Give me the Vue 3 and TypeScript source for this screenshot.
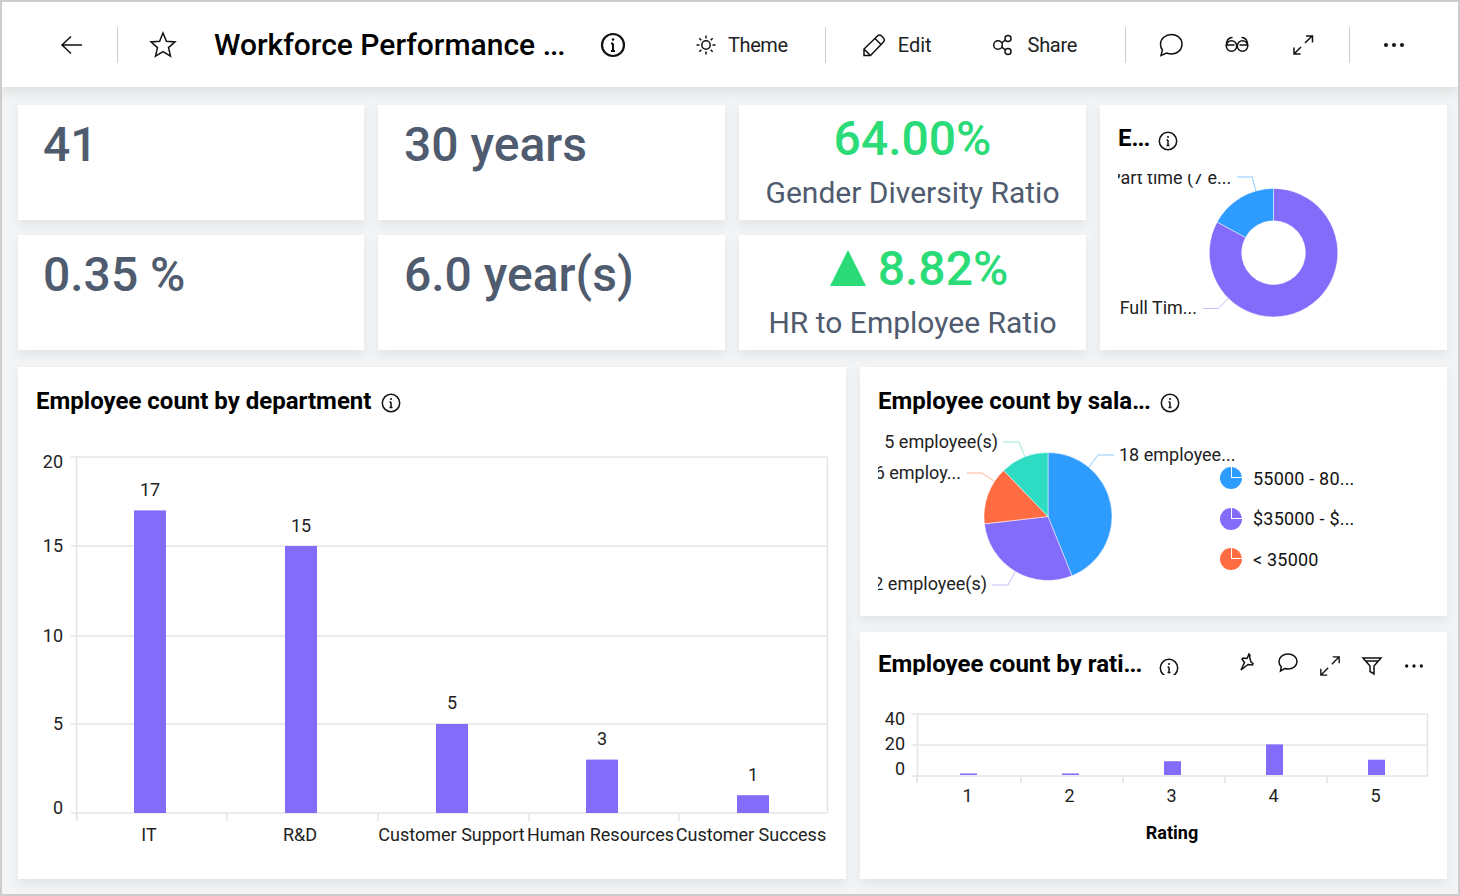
<template>
  <div class="frame">
    <header class="topbar">
      <button class="icon-btn back">
        <svg class="ico" width="24" height="24" viewBox="0 0 24 24"><path d="M22 12H2M11 3.500L2 12l9 8.500" /></svg>
      </button>
      <span class="divider first-div"></span>
      <button class="icon-btn star">
        <svg class="ico" width="28" height="28" viewBox="0 0 28 28"><path d="M14 2l3.400 8.200 8.600.7-6.500 5.700 2 8.600-7.500-4.600-7.500 4.600 2-8.600L2 10.900l8.600-.7z" /></svg>
      </button>
      <h1 class="title">Workforce Performance <span class="dots">...</span></h1>
      <svg class="ico info-big" width="26" height="26" viewBox="0 0 26 26"><circle cx="13" cy="13" r="11" /><path d="M13 11.500V19M11 11.500h2M11 19h4" /><circle class="dot" cx="13" cy="7.500" r="1.300" /></svg>

      <div class="action theme">
        <svg class="ico" width="22" height="22" viewBox="0 0 22 22"><circle cx="11" cy="11" r="4.200" /><path d="M11 1.500v3M11 17.500v3M1.500 11h3M17.500 11h3M4.300 4.300l2 2M15.700 15.700l2 2M4.300 17.700l2-2M15.700 6.300l2-2" /></svg>
        <span class="theme-text">Theme</span>
      </div>
      <span class="divider theme-div"></span>
      <div class="action edit">
        <svg class="ico" width="24" height="24" viewBox="0 0 24 24"><path d="M2 22.500v-6.500L15.500 3c1.200-1.200 2.800-1.200 4 0l2 2c1.200 1.200 1.200 2.800 0 4L8.500 22.500zM2 16l6.500 6.500M13 5.500l6 6" /></svg>
        <span>Edit</span>
      </div>
      <div class="action share">
        <svg class="ico" width="22" height="22" viewBox="0 0 22 22"><circle cx="6" cy="11" r="4.300" /><circle cx="16" cy="4.500" r="3" /><circle cx="16" cy="17.500" r="3" /><path d="M9.700 8.800l3.800-2.800M9.700 13.200l3.800 2.800" /></svg>
        <span class="share-text">Share</span>
      </div>
      <span class="divider share-div"></span>
      <button class="icon-btn comment">
        <svg class="ico" width="26" height="26" viewBox="0 0 26 26"><path d="M13.500 2.500c6 0 10.500 4.200 10.500 9.700s-4.500 9.800-10.500 9.800c-1.700 0-3.300-.3-4.800-1L3 23.500l1.400-5.500C3 16.400 2.500 14.400 2.500 12.200c0-5.500 5-9.700 11-9.700z" /></svg>
      </button>
      <button class="icon-btn glasses">
        <svg class="ico glass" width="26" height="26" viewBox="0 0 26 26"><circle cx="7.500" cy="15" r="5.200" /><circle cx="18.500" cy="15" r="5.200" /><path d="M2.300 15C2.300 10 4.500 6.500 8.500 6.500M23.700 15C23.700 10 21.500 6.500 17.500 6.500M2.500 14h8M15.500 14h8" /></svg>
      </button>
      <button class="icon-btn expand">
        <svg class="ico" width="24" height="24" viewBox="0 0 24 24"><path d="M14 10l7-7M15 3h6.500v6.500M10 14l-7 7M3 14.500V21h6.500" /></svg>
      </button>
      <span class="divider expand-div"></span>
      <button class="icon-btn more">
        <svg class="ico" width="24" height="24" viewBox="0 0 24 24"><circle class="dot" cx="4" cy="12" r="2" /><circle class="dot" cx="12" cy="12" r="2" /><circle class="dot" cx="20" cy="12" r="2" /></svg>
      </button>
    </header>

    <main class="dashboard">
      <div class="top-grid">
        <section class="card kpi first-col">41</section>
        <section class="card kpi">30 years</section>
        <section class="card ratio">
          <div class="ratio-value">64.00%</div>
          <div class="ratio-label">Gender Diversity Ratio</div>
        </section>
        <section class="card donut-card">
          <div class="card-title small">
            <span>E<span class="dots">...</span></span>
            <svg class="ico info" width="20" height="20" viewBox="0 0 20 20"><circle cx="10" cy="10" r="8.700" /><path d="M10 9v5.500M8.500 9H10M8.500 14.500h3" /><circle class="dot" cx="10" cy="6" r="1" /></svg>
          </div>
          <svg class="donut-svg" viewBox="1118 174 329 177">
            <path v-for="s in donutSlices" :key="s.color" :d="s.d" :fill="s.color" stroke="#fff" stroke-width="0.5" />
            <polyline points="1237,177 1252,177 1256,192" class="lead" stroke="#8ccbff" />
            <polyline points="1203,309 1218,309 1229,298" class="lead" stroke="#c6b9fc" />
            <text x="1231" y="184" text-anchor="end" class="chart-text">Part time (7 e...</text>
            <text x="1119" y="315" class="chart-text">Full Tim...</text>
          </svg>
        </section>
        <section class="card kpi first-col">0.35 %</section>
        <section class="card kpi">6.0 year(s)</section>
        <section class="card ratio">
          <div class="ratio-value offset">
            <svg class="up" width="36" height="36" viewBox="0 0 36 36"><path d="M18 0l18 36H0z" /></svg>
            8.82%
          </div>
          <div class="ratio-label">HR to Employee Ratio</div>
        </section>
      </div>

      <div class="bottom-row">
        <section class="card dept-card">
          <div class="card-title">
            <span>Employee count by department</span>
            <svg class="ico info" width="20" height="20" viewBox="0 0 20 20"><circle cx="10" cy="10" r="8.700" /><path d="M10 9v5.500M8.500 9H10M8.500 14.500h3" /><circle class="dot" cx="10" cy="6" r="1" /></svg>
          </div>
          <svg class="dept-svg" viewBox="18 437 828 442">
            <line v-for="t in deptTicks" :key="t.label" x1="71" x2="827" :y1="t.y" :y2="t.y" class="grid" />
            <line x1="76.500" x2="76.500" y1="457" y2="820" class="grid" />
            <line x1="827.500" x2="827.500" y1="457" y2="813" class="grid" />
            <line v-for="x in deptTickX" :key="x" :x1="x" :x2="x" y1="813" y2="821" class="grid" />
            <text v-for="t in deptTicks" :key="'l' + t.label" x="63" :y="t.textY" text-anchor="end" class="chart-text">{{ t.label }}</text>
            <g v-for="d in deptBars" :key="d.name">
              <rect :x="d.x - 16" :y="d.y" width="32" :height="813 - d.y" class="bar" />
              <text :x="d.x" :y="d.valueY" text-anchor="middle" class="chart-text">{{ d.value }}</text>
              <text :x="d.labelX" y="841" text-anchor="middle" class="chart-text">{{ d.name }}</text>
            </g>
          </svg>
        </section>

        <div class="side-stack">
          <section class="card salary-card">
            <div class="card-title">
              <span>Employee count by sala<span class="dots">...</span></span>
              <svg class="ico info" width="20" height="20" viewBox="0 0 20 20"><circle cx="10" cy="10" r="8.700" /><path d="M10 9v5.500M8.500 9H10M8.500 14.500h3" /><circle class="dot" cx="10" cy="6" r="1" /></svg>
            </div>
            <svg class="salary-svg" viewBox="878 430 569 186">
              <path v-for="s in salarySlices" :key="s.color" :d="s.d" :fill="s.color" stroke="#fff" stroke-width="0.5" />
              <polyline points="1114,455 1098,455 1089,467" class="lead" stroke="#8ccbff" />
              <polyline points="1003,442 1019,442 1025,457" class="lead" stroke="#97ebdc" />
              <polyline points="967,473 982,473 994,481" class="lead" stroke="#ffb39c" />
              <polyline points="992,585 1008,585 1015,572" class="lead" stroke="#c6b9fc" />
              <text x="1119" y="461" class="chart-text">18 employee...</text>
              <text x="998" y="448" text-anchor="end" class="chart-text">5 employee(s)</text>
              <text x="961" y="479" text-anchor="end" class="chart-text">6 employ...</text>
              <text x="987" y="590" text-anchor="end" class="chart-text">12 employee(s)</text>
            </svg>
            <ul class="legend">
              <li v-for="l in legend" :key="l.label">
                <svg width="24" height="24" viewBox="0 0 24 24">
                  <circle cx="12" cy="12" r="11" :fill="l.color" />
                  <path d="M12 12V0h12v12z" fill="#fff" />
                  <path d="M13 11V1.100A11 11 0 0 1 22.900 11z" :fill="l.color" />
                </svg>
                <span>{{ l.label }}</span>
              </li>
            </ul>
          </section>

          <section class="card rating-card">
            <div class="rating-head">
              <div class="card-title clip">
                <span>Employee count by rati<span class="dots">...</span></span>
                <svg class="ico info" width="20" height="20" viewBox="0 0 20 20"><circle cx="10" cy="10" r="8.700" /><path d="M10 9v5.500M8.500 9H10M8.500 14.500h3" /><circle class="dot" cx="10" cy="6" r="1" /></svg>
              </div>
              <div class="tools">
                <svg class="ico" width="20" height="20" viewBox="0 0 20 20"><path d="M12 2l1 1.500-.5 1.500 1.500 5 2 1.500-.5 1.500-4.500-.5L4 18l3.500-7.500L5 7l1-1 4 .5z" /></svg>
                <svg class="ico" width="22" height="22" viewBox="0 0 22 22"><path d="M11 2c5 0 9 3.200 9 7.500S16 17 11 17c-1.200 0-2.300-.2-3.300-.5L3.500 19l.8-4.300C2.800 13.300 2 11.500 2 9.500 2 5.200 6 2 11 2z" /></svg>
                <svg class="ico low" width="22" height="22" viewBox="0 0 24 24"><path d="M14 10l8-8M15 2h7v7M10 14l-8 8M2 15v7h7" /></svg>
                <svg class="ico low" width="22" height="22" viewBox="0 0 22 22"><path d="M2 3h18l-7 8v8l-4-2.500V11zM5 6h12" /></svg>
                <svg class="ico low" width="22" height="22" viewBox="0 0 24 24"><circle class="dot" cx="4" cy="12" r="1.800" /><circle class="dot" cx="12" cy="12" r="1.800" /><circle class="dot" cx="20" cy="12" r="1.800" /></svg>
              </div>
            </div>
            <svg class="rating-svg" viewBox="860 700 587 179">
              <line v-for="t in ratingTicks" :key="t.label" x1="912" x2="1428" :y1="t.y" :y2="t.y" class="grid" />
              <line x1="917.500" x2="917.500" y1="714" y2="782" class="grid" />
              <line x1="1427.500" x2="1427.500" y1="714" y2="776" class="grid" />
              <line v-for="x in ratingTickX" :key="x" :x1="x" :x2="x" y1="776" y2="783" class="grid" />
              <text v-for="t in ratingTicks" :key="'l' + t.label" x="905" :y="t.y + t.dy" text-anchor="end" class="chart-text">{{ t.label }}</text>
              <g v-for="d in ratingBars" :key="d.label">
                <rect :x="d.x - 8" :y="d.y" width="17" :height="775 - d.y" class="bar" />
                <text :x="d.x - 0.5" y="802" text-anchor="middle" class="chart-text">{{ d.label }}</text>
              </g>
              <text x="1172" y="839" text-anchor="middle" class="chart-text axis-name">Rating</text>
            </svg>
          </section>
        </div>
      </div>
    </main>
  </div>
</template>

<script setup lang="ts">
interface Slice {
  d: string;
  color: string;
}

const BLUE = '#2e9bff';
const PURPLE = '#846cfb';
const ORANGE = '#ff6c42';
const TEAL = '#2edcc4';

function polar(cx: number, cy: number, r: number, deg: number): string {
  const a = (deg * Math.PI) / 180;
  return `${(cx + r * Math.sin(a)).toFixed(2)} ${(cy - r * Math.cos(a)).toFixed(2)}`;
}

function slices(cx: number, cy: number, r: number, inner: number, parts: { v: number; color: string }[]): Slice[] {
  const total = parts.reduce((sum, p) => sum + p.v, 0);
  let start = 0;
  return parts.map((p) => {
    const end = start + (p.v / total) * 360;
    const large = end - start > 180 ? 1 : 0;
    const d = inner
      ? `M${polar(cx, cy, r, start)}A${r} ${r} 0 ${large} 1 ${polar(cx, cy, r, end)}L${polar(cx, cy, inner, end)}A${inner} ${inner} 0 ${large} 0 ${polar(cx, cy, inner, start)}Z`
      : `M${cx} ${cy}L${polar(cx, cy, r, start)}A${r} ${r} 0 ${large} 1 ${polar(cx, cy, r, end)}Z`;
    start = end;
    return { d, color: p.color };
  });
}

const donutSlices = slices(1273.5, 253, 64.5, 32, [
  { v: 34, color: PURPLE },
  { v: 7, color: BLUE },
]);

const salarySlices = slices(1048, 516.5, 64, 0, [
  { v: 18, color: BLUE },
  { v: 12, color: PURPLE },
  { v: 6, color: ORANGE },
  { v: 5, color: TEAL },
]);

const legend = [
  { label: '55000 - 80...', color: BLUE },
  { label: '$35000 - $...', color: PURPLE },
  { label: '< 35000', color: ORANGE },
];

const deptTicks = [
  { label: '20', y: 457, textY: 468 },
  { label: '15', y: 546, textY: 552 },
  { label: '10', y: 636, textY: 642 },
  { label: '5', y: 724, textY: 730 },
  { label: '0', y: 813, textY: 814 },
];
const deptTickX = [77, 227, 378, 529, 679];
const deptBars = [
  { name: 'IT', value: 17, x: 150, labelX: 149, gap: 14 },
  { name: 'R&D', value: 15, x: 301, labelX: 300, gap: 14 },
  { name: 'Customer Support', value: 5, x: 452, labelX: 451.5, gap: 15 },
  { name: 'Human Resources', value: 3, x: 602, labelX: 600.5, gap: 15 },
  { name: 'Customer Success', value: 1, x: 753, labelX: 751, gap: 14 },
].map((d) => {
  const y = 813 - d.value * 17.8;
  return { ...d, y, valueY: y - d.gap };
});

const ratingTicks = [
  { label: '40', y: 714, dy: 11 },
  { label: '20', y: 745, dy: 5 },
  { label: '0', y: 776, dy: -1 },
];
const ratingTickX = [917, 1021, 1123, 1225, 1327];
const ratingBars = [
  { label: '1', value: 1, x: 968 },
  { label: '2', value: 1, x: 1070 },
  { label: '3', value: 9, x: 1172 },
  { label: '4', value: 20, x: 1274 },
  { label: '5', value: 10, x: 1376 },
].map((d) => ({ ...d, y: 775 - d.value * 1.53 }));
</script>

<style>
html,
body {
  margin: 0;
  background: #f3f4f5;
}
</style>

<style scoped>
.frame {
  box-sizing: border-box;
  width: 1460px;
  height: 896px;
  border: 2px solid #ccc;
  background: #f3f4f5;
  font-family: Roboto, "Liberation Sans", sans-serif;
  color: #000;
  overflow: hidden;
}

.ico path,
.ico circle {
  fill: none;
  stroke: #111;
  stroke-width: 1.500;
}

.ico .dot {
  fill: #111;
  stroke: none;
}

.dots {
  letter-spacing: -1px;
}

.topbar {
  display: flex;
  align-items: center;
  height: 85px;
  background: #fff;
  box-shadow: 0 4px 12px rgba(60, 70, 80, 0.14);
  position: relative;
}

.icon-btn {
  display: flex;
  padding: 0;
  border: 0;
  background: none;
}

.back {
  margin-left: 58px;
}

.divider {
  width: 1px;
  height: 36px;
  background: #c6d0da;
}

.first-div {
  margin-left: 33px;
}

.star {
  margin-left: 31px;
}

.title {
  margin: 0 0 0 37px;
  width: 386px;
  font-size: 30px;
  font-weight: 500;
  white-space: nowrap;
}

.info-big circle:first-child {
  stroke-width: 2.200;
}

.info-big path {
  stroke-width: 2;
}

.action {
  display: flex;
  align-items: center;
  font-size: 20px;
  color: #222;
}

.theme {
  margin-left: 69px;
  gap: 11px;
}

.theme-text {
  letter-spacing: -0.4px;
}

.theme-div {
  margin-left: 37px;
}

.edit {
  margin-left: 36px;
  gap: 12px;
}

.share {
  margin-left: 60px;
  gap: 14px;
}

.share-text {
  letter-spacing: -0.3px;
}

.share-div {
  margin-left: 47.500px;
}

.comment {
  margin-left: 32px;
}

.glasses {
  margin-left: 40px;
}

.glass {
  transform: translateY(-1px);
}

.expand {
  margin-left: 41px;
}

.expand-div {
  margin-left: 34px;
}

.more {
  margin-left: 32px;
}

.dashboard {
  padding: 18px 0 0 16px;
}

.top-grid {
  display: grid;
  grid-template-columns: 346px 347px 347px 347px;
  grid-template-rows: 115px 115px;
  gap: 15px 14px;
}

.bottom-row {
  display: flex;
  gap: 14px;
  margin-top: 17px;
}

.card {
  background: #fff;
  box-shadow: 0 5px 10px rgba(60, 70, 80, 0.09);
  overflow: hidden;
}

.kpi {
  box-sizing: border-box;
  padding: 11px 26px;
  font-size: 48px;
  font-weight: 500;
  line-height: 58px;
  color: #4f5b6e;
}

.kpi.first-col {
  padding-left: 25px;
}

.ratio {
  text-align: center;
}

.ratio-value {
  display: flex;
  justify-content: center;
  align-items: center;
  gap: 12px;
  height: 66px;
  font-size: 48px;
  font-weight: 500;
  color: #2bdb78;
}

.ratio-value.offset {
  padding-left: 13px;
}

.up path {
  fill: #2bdb78;
}

.ratio-label {
  font-size: 30px;
  line-height: 36px;
  margin-top: 4px;
  color: #4f5b6e;
}

.donut-card {
  grid-column: 4;
  grid-row: 1 / span 2;
  display: flex;
  flex-direction: column;
}

.card-title {
  display: flex;
  align-items: center;
  gap: 10px;
  box-sizing: border-box;
  height: 70px;
  padding: 0 18px 2px;
  font-size: 24px;
  font-weight: 700;
  white-space: nowrap;
}

.card-title.small {
  height: 69px;
  padding-bottom: 2px;
  gap: 9px;
}

.info {
  margin-top: 4px;
  flex: none;
}

.small .info {
  margin-top: 6px;
}

.donut-svg {
  display: block;
  margin-left: 18px;
  width: 329px;
  height: 177px;
}

.chart-text {
  font-size: 18px;
  fill: #222;
}

.axis-name {
  font-weight: 700;
  fill: #000;
}

.lead {
  fill: none;
  stroke-width: 1;
}

.grid {
  stroke: #e4e5e8;
  stroke-width: 1.500;
}

.bar {
  fill: #846cfb;
}

.dept-card {
  width: 828px;
  height: 512px;
  flex: none;
}

.dept-svg {
  display: block;
  width: 828px;
  height: 442px;
}

.side-stack {
  display: flex;
  flex-direction: column;
  gap: 16px;
  width: 587px;
  flex: none;
}

.salary-card {
  position: relative;
  height: 249px;
}

.salary-svg {
  display: block;
  margin-left: 18px;
  width: 569px;
  height: 186px;
  margin-top: -7px;
}

.legend {
  position: absolute;
  left: 359px;
  top: 91px;
  margin: 0;
  padding: 0;
  list-style: none;
  font-size: 18px;
  letter-spacing: 0.2px;
  color: #111;
}

.legend li {
  display: flex;
  align-items: center;
  gap: 10px;
  height: 40.500px;
}

.rating-card {
  height: 247px;
}

.rating-head {
  display: flex;
  justify-content: space-between;
  height: 68px;
}

.clip {
  height: 29px;
  margin-top: 14px;
  overflow: hidden;
  padding-top: 7px;
  padding-bottom: 0;
  gap: 18px;
}

.clip .info {
  margin-top: 8px;
}

.tools {
  display: flex;
  gap: 20px;
  padding: 20px 22px 0 0;
}

.tools .low {
  margin-top: 3px;
}

.rating-svg {
  display: block;
  width: 587px;
  height: 179px;
}
</style>
